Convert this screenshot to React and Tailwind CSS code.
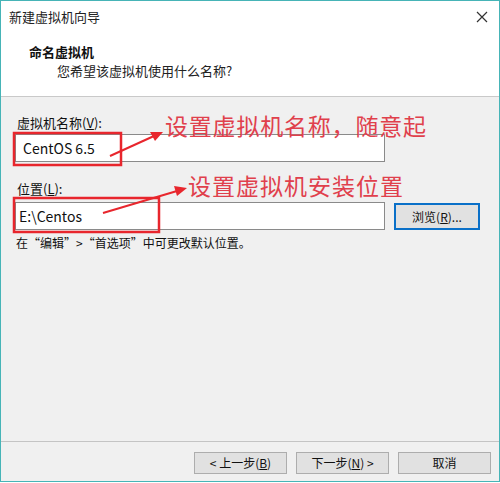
const font = { fontFamily: '"Noto Sans CJK SC", "Noto Sans", sans-serif' };

const WizardButton = ({ children, className = '' }) => (
    <button
        className={`h-[22px] w-[93px] border border-[#adadad] bg-[#e1e1e1] text-[12px] leading-none text-[#111] flex items-center justify-center ${className}`}
    >
        {children}
    </button>
);

const Annotations = () => (
    <div className="absolute inset-0 pointer-events-none">
        <svg width="500" height="483" className="absolute inset-0">
            {/* outlines around the two fields */}
            <rect x="14" y="133" width="107" height="32" fill="none" stroke="#e8262d" strokeWidth="2.5" />
            <rect x="14" y="198" width="145" height="34" fill="none" stroke="#e8262d" strokeWidth="2.5" />
            {/* arrows */}
            <line x1="110" y1="156" x2="154" y2="136" stroke="#e8262d" strokeWidth="2" />
            <polygon points="163,132 150,132 155,141" fill="#e8262d" />
            <line x1="103" y1="213" x2="177" y2="191" stroke="#e8262d" strokeWidth="2" />
            <polygon points="187,188 174,186 177,196" fill="#e8262d" />
        </svg>
        <div className="absolute left-[165px] top-[110px] text-[23px] leading-[30px] tracking-[0.8px] text-[#e0404c] whitespace-nowrap">
            设置虚拟机名称，随意起
        </div>
        <div className="absolute left-[188px] top-[170px] text-[23px] leading-[30px] tracking-[1px] text-[#e0404c] whitespace-nowrap">
            设置虚拟机安装位置
        </div>
    </div>
);

export default function App() {
    return (
        <div className="relative w-[500px] h-[483px] bg-white" style={font}>
            <div className="h-[482px] border border-[#46b4b7] flex flex-col">
                {/* title bar */}
                <div className="h-[31px] flex items-center justify-between pl-[8px] pr-[11px] bg-white">
                    <span className="text-[13px] text-[#222]">新建虚拟机向导</span>
                    <svg width="12" height="12" viewBox="0 0 12 12" className="text-[#333]">
                        <path d="M1 1 L11 11 M11 1 L1 11" stroke="currentColor" strokeWidth="1.2" />
                    </svg>
                </div>

                {/* header */}
                <div className="h-[65px] bg-white border-b border-[#c9c9c9] pt-[11px] text-[13px] leading-[17px]">
                    <div className="pl-[28px] font-bold text-[#111]">命名虚拟机</div>
                    <div className="pl-[56px] mt-[2px] text-[#222]">您希望该虚拟机使用什么名称?</div>
                </div>

                {/* body */}
                <div className="flex-1 bg-[#f0f0f0] pl-[14px] text-[13px] leading-[17px] text-[#111]">
                    <div className="mt-[17px] pl-[2px]">
                        虚拟机名称(<u>V</u>):
                    </div>
                    <div className="mt-[3px] w-[370px] h-[28px] bg-white border border-[#8a8a8a] flex items-center pl-[7px] text-[14px]">
                        CentOS 6.5
                    </div>

                    <div className="mt-[18px] pl-[2px]">
                        位置(<u>L</u>):
                    </div>
                    <div className="mt-[5px] flex items-center gap-[9px]">
                        <div className="w-[370px] h-[28px] bg-white border border-[#8a8a8a] flex items-center pl-[3px] text-[14px]">
                            E:\Centos
                        </div>
                        <button className="w-[86px] h-[27px] bg-[#e1e1e1] border-2 border-[#0a70c8] text-[12px] text-[#111]">
                            浏览(<u>R</u>)...
                        </button>
                    </div>

                    <div className="mt-[4px] pl-[1px] text-[12px]">
                        在“编辑”&gt;“首选项”中可更改默认位置。
                    </div>
                </div>

                {/* footer */}
                <div className="h-[40px] bg-[#f0f0f0] border-t border-[#c4c4c4] flex justify-end gap-[9px] pt-[10px] pr-[8px]">
                    <WizardButton>&lt; 上一步(<u>B</u>)</WizardButton>
                    <WizardButton>下一步(<u>N</u>) &gt;</WizardButton>
                    <WizardButton>取消</WizardButton>
                </div>
            </div>
            <Annotations />
        </div>
    );
}
